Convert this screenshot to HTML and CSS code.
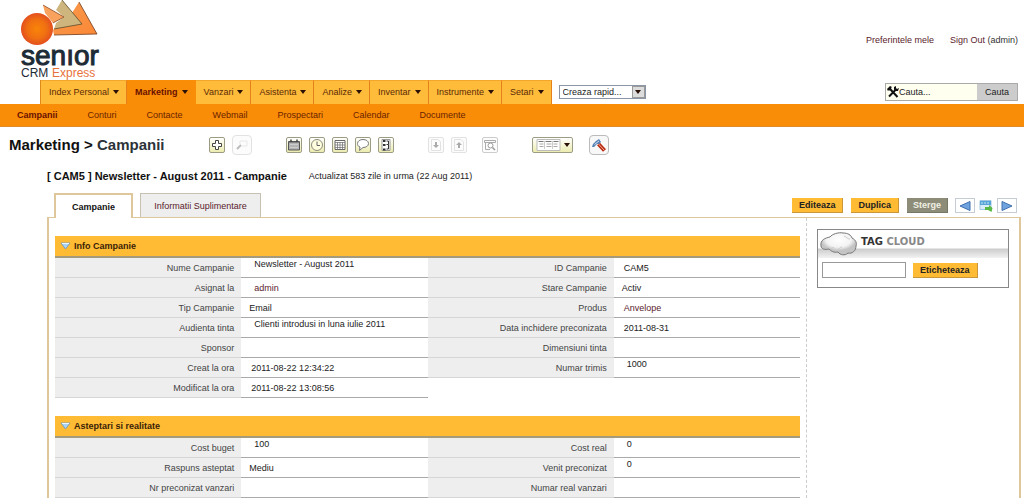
FILE: index.html
```html
<!DOCTYPE html>
<html lang="ro">
<head>
<meta charset="utf-8">
<title>Marketing &gt; Campanii</title>
<link rel="stylesheet" href="styles.css">
</head>
<body>
<header class="top">
  <svg class="logo" width="82" height="80" viewBox="0 0 82 80" role="img" aria-label="Senior CRM Express">
    <defs>
      <radialGradient id="sun"><stop offset="0" stop-color="#f98408"/><stop offset=".6" stop-color="#f06f12"/><stop offset="1" stop-color="#e3501f"/></radialGradient>
      <linearGradient id="sail" x1="0" y1="0" x2="1" y2="1"><stop offset="0" stop-color="#f79a4e"/><stop offset="1" stop-color="#fb8836"/></linearGradient>
    </defs>
    <path d="M58 2 49 16 32 30 33 35 76 34Z" fill="url(#sail)"/>
    <path d="M58 2 76 34 33 35" fill="none" stroke="#6e3a1c" stroke-width=".8"/>
    <path d="M41 0 35 10 43 17 35 23 33 29 61 24Z" fill="#cdb57d"/>
    <path d="M41 0 61 24 33 29" fill="none" stroke="#5d4a2b" stroke-width=".8"/>
    <path d="M22 5 43 17 32 23 24 13Z" fill="#f9a25d"/>
    <path d="M22 5 43 17 32 23" fill="none" stroke="#8b4a22" stroke-width=".8"/>
    <circle cx="16" cy="29" r="16" fill="url(#sun)"/>
    <text class="logo-name" x="0" y="65">senıor</text>
    <text class="logo-crm" x="0" y="77">CRM</text>
    <text class="logo-express" x="31" y="77">Express</text>
  </svg>
  <div class="user-links">
    <a href="#">Preferintele mele</a>
    <span><a href="#">Sign Out</a> (admin)</span>
  </div>
</header>

<div class="menu-row">
  <nav class="tabs">
    <a href="#">Index Personal<i class="caret"></i></a>
    <a href="#" class="current">Marketing<i class="caret"></i></a>
    <a href="#">Vanzari<i class="caret"></i></a>
    <a href="#">Asistenta<i class="caret"></i></a>
    <a href="#">Analize<i class="caret"></i></a>
    <a href="#">Inventar<i class="caret"></i></a>
    <a href="#">Instrumente<i class="caret"></i></a>
    <a href="#">Setari<i class="caret"></i></a>
  </nav>
  <div class="quick">
    <select aria-label="Creaza rapid"><option>Creaza rapid...</option></select>
    <span class="quick-arrow"><i class="caret"></i></span>
  </div>
  <form class="search">
    <svg width="12" height="12" viewBox="0 0 12 12" aria-hidden="true"><path d="M4 4 10.500 11M8.500 4 2 10.500" stroke="#111" stroke-width="2" fill="none"/><path d="M0 3 3 0 5 1 4 2 5 4 3 5 2 4 1 5ZM7 4V1L9 0V2L10 3 12 2 11 5 8 5Z" fill="#111"/></svg>
    <input type="text" aria-label="Cauta" value="Cauta...">
    <button type="button">Cauta</button>
  </form>
</div>

<nav class="subnav">
  <a href="#" class="current">Campanii</a>
  <a href="#">Conturi</a>
  <a href="#">Contacte</a>
  <a href="#">Webmail</a>
  <a href="#">Prospectari</a>
  <a href="#">Calendar</a>
  <a href="#">Documente</a>
</nav>

<div class="title-row">
  <h1>Marketing &gt; <a href="#">Campanii</a></h1>
  <div class="tools">
    <div class="group">
      <button class="tool" aria-label="Adauga"><svg viewBox="0 0 14 14"><path d="M5.500 2.500H8.500V5.500H11.500V8.500H8.500V11.500H5.500V8.500H2.500V5.500H5.500Z" fill="#fff" stroke="#444"/></svg></button>
      <button class="tool big faded" aria-label="Cauta"><svg viewBox="0 0 18 18"><path d="M4 13 8 9" stroke="#bbb" stroke-width="2"/><path d="M7 8V5H14V10H9" fill="none" stroke="#e8e8e8"/></svg></button>
    </div>
    <div class="group">
      <button class="tool" aria-label="Calendar"><svg viewBox="0 0 14 14"><path d="M1.500 3.500H12.500V12H1.500Z" fill="#b4b4b4" stroke="#555"/><path d="M2 4H12" stroke="#555"/><path d="M4 1.500V4M10 1.500V4" stroke="#444" stroke-width="1.500"/><path d="M3 6.500H11M3 9.500H11" stroke="#ccc"/></svg></button>
      <button class="tool" aria-label="Ora"><svg viewBox="0 0 14 14"><circle cx="7" cy="7" r="5.500" fill="#ffffdf" stroke="#8c8c7c"/><path d="M7 3.500V7.500H10" fill="none" stroke="#666"/></svg></button>
      <button class="tool" aria-label="Calculator"><svg viewBox="0 0 14 14"><path d="M2 2.500H12V11.500H2Z" fill="#fff" stroke="#666"/><path d="M2 4.500H12M2 7H12M2 9.500H12M4.500 4V11.500M7 4V11.500M9.500 4V11.500" stroke="#777" stroke-width=".8"/></svg></button>
      <button class="tool" aria-label="Chat"><svg viewBox="0 0 14 14"><path d="M7 1.500C10 1.500 12.500 3 12.500 5.500S10 9.500 7 9.500L3.500 12.500 4 9C2 8.500 1.500 7 1.500 5.500 1.500 3 4 1.500 7 1.500Z" fill="#fff" stroke="#777"/></svg></button>
      <button class="tool" aria-label="Istoric"><svg viewBox="0 0 14 14"><path d="M3 1.500H11V12.500H3Z" fill="#fff" stroke="#999"/><path d="M4 2H6.500V4H4ZM4 10.500H6.500V12.500H4ZM4 6H6.500V8H4Z" fill="#333"/><path d="M7.500 3H9.500V6.500H7.500M9.500 6.500V11H7.500" fill="none" stroke="#333"/></svg></button>
    </div>
    <div class="group">
      <button class="tool faded" aria-label="Importa"><svg viewBox="0 0 14 14"><path d="M2.500 1.500H9L11.500 4V12.500H2.500Z" fill="none" stroke="#e2e2e2"/><path d="M6 4H8V7H10L7 10 4 7H6Z" fill="#aaa"/></svg></button>
      <button class="tool faded" aria-label="Exporta"><svg viewBox="0 0 14 14"><path d="M2.500 1.500H9L11.500 4V12.500H2.500Z" fill="none" stroke="#e2e2e2"/><path d="M6 10H8V7H10L7 4 4 7H6Z" fill="#aaa"/></svg></button>
      <button class="tool faded find" aria-label="Duplicate"><svg viewBox="0 0 14 14"><path d="M1.500 2.500H12.500V4.500H1.500ZM2.500 4.500V11.500H7" fill="none" stroke="#aaa"/><circle cx="7.500" cy="7.500" r="2.500" fill="#fff" stroke="#999"/><path d="M9.500 9.500 12 12" stroke="#999" stroke-width="1.500"/></svg></button>
    </div>
    <button class="tool wide" aria-label="Coloane"><svg viewBox="0 0 24 12"><path d="M.5.5H23.500V11.500H.5Z" fill="#fff" stroke="#bbb"/><path d="M2 2.500H7M9 2.500H15M17 2.500H22" stroke="#777"/><path d="M3 5H7M3 7.500H7M10 5H15M10 7.500H15M17 5H21M17 7.500H21" stroke="#aaa"/><path d="M8 2V10M16 2V10" stroke="#ccc"/></svg><i class="caret"></i></button>
    <button class="tool big hammer" aria-label="Setari"><svg viewBox="0 0 18 18"><path d="M8.500 8 14.500 14.500" stroke="#b92a12" stroke-width="4"/><path d="M8.500 8 14.500 14.500" stroke="#f6b09a"/><path d="M2 11 3 8 6 5 9 3 11 6 9 8 7 8 4 11Z" fill="#5580b4"/><path d="M4.500 8.500 9 5" stroke="#d0e0f2"/></svg></button>
  </div>
</div>

<main class="record">
  <div class="record-title">
    <h2>[ CAM5 ] Newsletter - August 2011 - Campanie</h2>
    <span>Actualizat 583 zile in urma (22 Aug 2011)</span>
  </div>
  <div class="record-bar">
    <nav class="record-tabs">
      <a href="#" class="current">Campanie</a>
      <a href="#" class="other">Informatii Suplimentare</a>
    </nav>
    <div class="actions">
      <button class="btn">Editeaza</button>
      <button class="btn">Duplica</button>
      <button class="btn dark">Sterge</button>
      <div class="pager">
        <button class="step" aria-label="Inapoi"><svg width="12" height="10" viewBox="0 0 12 10"><path d="M11 .5V9.500L1 5Z" fill="#6fa3dd" stroke="#3f70b0"/></svg></button>
        <button class="jump" aria-label="Salt"><svg width="14" height="14" viewBox="0 0 14 14"><path d="M1 1.500H12V10.500H1Z" fill="#d9ecfa" stroke="#9fc6e2"/><path d="M1 2H12V6H1Z" fill="#57a5d8"/><path d="M2 4H11" stroke="#c9e6f8" stroke-dasharray="2 1"/><path d="M6 8H10V6L13.500 9 12.500 13 9 11H6Z" fill="#58b947"/></svg></button>
        <button class="step" aria-label="Inainte"><svg width="12" height="10" viewBox="0 0 12 10"><path d="M1 .5V9.500L11 5Z" fill="#6fa3dd" stroke="#3f70b0"/></svg></button>
      </div>
    </div>
  </div>

  <div class="panel">
    <div class="details">
      <section>
        <h3><svg width="11" height="8" viewBox="0 0 11 8"><path d="M1 1H10L5.500 7Z" fill="#a9d3f5" stroke="#7f9fb8" stroke-linejoin="round"/><path d="M2 1.500H9" stroke="#e9f6ff"/></svg>Info Campanie</h3>
        <table>
          <tr><th>Nume Campanie</th><td class="raised">Newsletter - August 2011</td><th>ID Campanie</th><td class="text">CAM5</td></tr>
          <tr><th>Asignat la</th><td class="raised mid"><a href="#">admin</a></td><th>Stare Campanie</th><td>Activ</td></tr>
          <tr><th>Tip Campanie</th><td>Email</td><th>Produs</th><td class="text"><a href="#">Anvelope</a></td></tr>
          <tr><th>Audienta tinta</th><td class="raised">Clienti introdusi in luna iulie 2011</td><th>Data inchidere preconizata</th><td class="text">2011-08-31</td></tr>
          <tr><th>Sponsor</th><td></td><th>Dimensiuni tinta</th><td></td></tr>
          <tr><th>Creat la ora</th><td class="text">2011-08-22 12:34:22</td><th>Numar trimis</th><td class="raised">1000</td></tr>
          <tr><th>Modificat la ora</th><td class="text">2011-08-22 13:08:56</td><td class="blank" colspan="2"></td></tr>
        </table>
      </section>
      <section>
        <h3><svg width="11" height="8" viewBox="0 0 11 8"><path d="M1 1H10L5.500 7Z" fill="#a9d3f5" stroke="#7f9fb8" stroke-linejoin="round"/><path d="M2 1.500H9" stroke="#e9f6ff"/></svg>Asteptari si realitate</h3>
        <table>
          <tr><th>Cost buget</th><td class="raised">100</td><th>Cost real</th><td class="raised">0</td></tr>
          <tr><th>Raspuns asteptat</th><td>Mediu</td><th>Venit preconizat</th><td class="raised">0</td></tr>
          <tr><th>Nr preconizat vanzari</th><td></td><th>Numar real vanzari</th><td></td></tr>
        </table>
      </section>
    </div>
    <aside>
      <div class="cloud">
        <div class="cloud-head">
          <svg width="38" height="26" viewBox="0 0 38 26" aria-hidden="true"><defs><radialGradient id="puff" cx=".5" cy=".3"><stop offset="0" stop-color="#fff"/><stop offset=".7" stop-color="#f3f3f3"/><stop offset="1" stop-color="#c4c4c4"/></radialGradient></defs><path d="M1 15C0 9 5 7 10 6 12 3 19 1 23 2 28 2 31 4 32 7 36 9 37 12 36 15 36 20 32 23 28 22 25 25 20 24 18 21 14 22 11 20 9 18 5 19 1 18 1 15Z" fill="url(#puff)" stroke="#777"/><path d="M17 20C20 18 19 16 22 16M24 5C27 6 27 8 30 8M9 17C11 18 13 17 14 16" fill="none" stroke="#ccc"/></svg>
          <span><b>TAG</b> CLOUD</span>
        </div>
        <form class="cloud-form">
          <input type="text" aria-label="Eticheta">
          <button type="button" class="btn">Eticheteaza</button>
        </form>
      </div>
    </aside>
  </div>
</main>
</body>
</html>
```
FILE: styles.css
```css
* { box-sizing: border-box; }
body {
  margin: 0;
  min-height: 100vh;
  display: flex;
  flex-direction: column;
  background: #fff;
  color: #222;
  font: 9px/12px "Liberation Sans", Arial, sans-serif;
}
a { color: #5a1a2c; text-decoration: none; }
button, input, select { font: inherit; color: inherit; margin: 0; padding: 0; border-radius: 0; }
svg { display: block; flex: none; }
h1, h2, h3 { margin: 0; }

.top { display: flex; justify-content: space-between; align-items: center; padding: 0 6px 0 21px; height: 80px; }
.logo { overflow: visible; }
.logo-name { font-size: 28px; fill: #1d2b36; stroke: #1d2b36; stroke-width: 1px; }
.logo-crm { font-size: 12px; fill: #1d2b36; }
.logo-express { font-size: 12px; fill: #e8723c; }
.user-links { display: flex; gap: 16px; color: #333; }

.menu-row { display: flex; align-items: center; height: 24px; padding: 0 6px 0 40px; }
.tabs { display: flex; align-self: stretch; border-left: 1px solid #e08a1c; }
.tabs a {
  display: flex; align-items: center; gap: 4px; padding: 0 7px 2px 8px;
  background: #ffbb3a; border-top: 1px solid #f3a52c; border-right: 1px solid #e5801a; color: #5c2a05;
}
.tabs .current { background: #f98d07; border-color: #f98d07; color: #6a1000; font-weight: bold; }
.caret { display: block; flex: none; border: solid transparent; border-width: 4px 3px 0; border-top-color: #2a1005; }
.quick { position: relative; margin-left: 7px; width: 87px; height: 14px; }
.quick select { display: block; width: 100%; height: 100%; appearance: none; background: #fff; border: 1px solid #8a95a5; padding-left: 3px; }
.quick-arrow {
  position: absolute; top: 1px; right: 1px; bottom: 1px; width: 13px; pointer-events: none;
  display: flex; align-items: center; justify-content: center; background: #dcdcdc; border: 1px solid #999;
}
.search { display: flex; align-items: center; margin-left: auto; width: 133px; height: 18px; padding-left: 1px; background: #fffff0; border: 1px solid #aaa; }
.search input { flex: 1; min-width: 0; border: 0; background: none; }
.search button { align-self: stretch; width: 40px; border: 0; background: #ccc; }

.subnav { display: flex; align-items: center; gap: 30px; height: 22px; padding-left: 17px; background: #f98d07; }
.subnav a { color: #6a2200; }
.subnav .current { font-weight: bold; color: #6a1000; }

.title-row { display: flex; align-items: center; height: 36px; padding-left: 9px; border-top: 1px solid #e08a2c; }
h1 { width: 200px; font-size: 15px; line-height: 18px; color: #111; }
h1 a { color: #2c3338; }
.tools { display: flex; align-items: center; gap: 34px; }
.group { display: flex; align-items: center; gap: 7px; }
.tool {
  display: flex; align-items: center; justify-content: center; width: 16px; height: 16px;
  border: 1px solid #9c9c84; border-radius: 2px; background: linear-gradient(#fff, #ececb0);
}
.tool svg { width: 14px; height: 14px; }
.faded { border-color: #e2e2e2; background: #fcfcfc; }
.find { margin-left: 8px; border-color: #ccc; }
.wide { width: 41px; gap: 3px; }
.wide svg { width: 25px; height: 12px; }
.big { width: 20px; height: 20px; border-radius: 4px; }
.big svg { width: 18px; height: 18px; }
.hammer { margin-left: -18px; border-color: #bbb; background: #f8f8f8; }

.record { flex: 1; display: flex; flex-direction: column; padding: 7px 3px 0 47px; }
.record-title { display: flex; align-items: center; gap: 22px; height: 14px; }
h2 { font-size: 11px; line-height: 14px; color: #111; }
.record-bar { display: flex; align-items: flex-end; justify-content: space-between; padding: 10px 4px 0 7px; }
.record-tabs { display: flex; gap: 7px; }
.record-tabs a {
  display: flex; align-items: center; justify-content: center; width: 79px; height: 25px; margin-bottom: -1px;
  border: 2px solid #dfc79c; border-bottom: 0; background: #fff;
}
.record-tabs .current { position: relative; font-weight: bold; color: #111; }
.record-tabs .other { width: 121px; height: 24px; margin-bottom: 0; border: 1px solid #c9c0b4; border-bottom: 0; background: #eee; }
.actions { display: flex; align-items: center; gap: 8px; padding-bottom: 4px; }
.btn { height: 15px; padding: 0 7px; border: solid #c9963a; border-width: 0 1px 1px 0; background: #ffbb33; font-weight: bold; color: #222; }
.dark { padding: 0 6px; background: #8c8c78; border-color: #777766; color: #f0f0e4; }
.pager { display: flex; align-items: center; gap: 4px; margin-left: -1px; }
.step { display: flex; align-items: center; justify-content: center; width: 20px; height: 15px; border: 1px solid #c5ccd4; background: #fff; }
.jump { border: 0; background: none; }

.panel { flex: 1; display: flex; border: solid #dfc79c; border-width: 1px 2px 0; padding: 0 10px 0 6px; }
.details { flex: 1; padding: 18px 6px 0 0; border-right: 1px dashed #ccc; }
section + section { margin-top: 18px; }
h3 { display: flex; align-items: center; gap: 3px; height: 22px; padding-left: 5px; background: #ffbb33; border-bottom: 2px solid #a59a7c; font-size: 9px; color: #3a2208; }
table { width: 100%; table-layout: fixed; border-collapse: separate; border-spacing: 0; }
tr { height: 20px; }
th, td { padding: 0 8px; text-align: left; vertical-align: middle; border-bottom: 1px solid #aaa; }
th { padding-right: 7px; text-align: right; font-weight: normal; color: #444; background: #eee; border-color: #d6d6d6; }
.text { padding-left: 10px; }
.raised { padding-left: 13px; vertical-align: top; }
.mid { vertical-align: middle; }
.blank { border: 0; }

aside { width: 202px; padding: 11px 0 0 10px; }
.cloud { border: 1px solid #888; }
.cloud-head { display: flex; align-items: center; gap: 3px; height: 28px; padding-left: 2px; background: linear-gradient(#fff 18px, #ccc 19px, #f2f2f2 28px); font-size: 10px; font-weight: bold; color: #888; }
.cloud-head span { padding-bottom: 4px; font-family: "DejaVu Sans", sans-serif; }
.cloud-head b { color: #333; }
.cloud-form { display: flex; align-items: center; gap: 7px; padding: 4px 4px 9px; }
.cloud-form input { width: 84px; height: 16px; border: 1px solid #999; background: #fff; }
```
